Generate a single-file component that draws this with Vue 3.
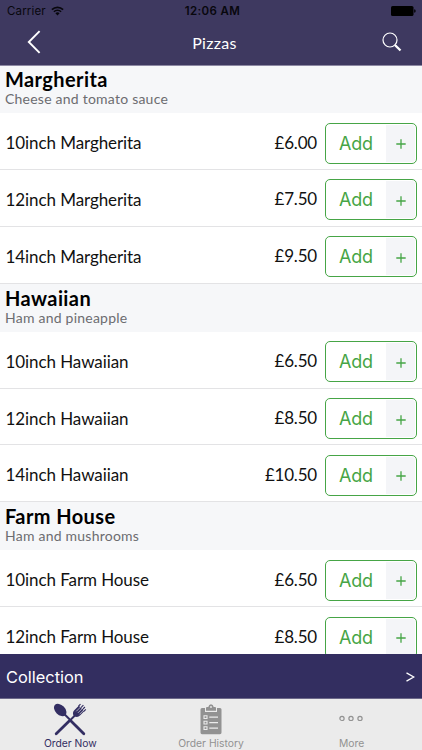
<script setup>
const sections = [
  {
    name: 'Margherita',
    description: 'Cheese and tomato sauce',
    items: [
      { name: '10inch Margherita', price: '£6.00' },
      { name: '12inch Margherita', price: '£7.50' },
      { name: '14inch Margherita', price: '£9.50' },
    ],
  },
  {
    name: 'Hawaiian',
    description: 'Ham and pineapple',
    items: [
      { name: '10inch Hawaiian', price: '£6.50' },
      { name: '12inch Hawaiian', price: '£8.50' },
      { name: '14inch Hawaiian', price: '£10.50' },
    ],
  },
  {
    name: 'Farm House',
    description: 'Ham and mushrooms',
    items: [
      { name: '10inch Farm House', price: '£6.50' },
      { name: '12inch Farm House', price: '£8.50' },
    ],
  },
]
</script>

<template>
  <div class="screen">
    <header class="top">
      <div class="status">
        <div class="carrier">
          <span>Carrier</span>
          <svg width="13" height="10" viewBox="0 0 13 10" fill="none" stroke="#08070d">
            <path d="M.9 3.6a8 8 0 0 1 11.2 0" stroke-width="1.7" />
            <path d="M2.9 5.8a5.1 5.1 0 0 1 7.2 0" stroke-width="1.6" />
            <path d="M6.5 9.4 4.4 7.2a3 3 0 0 1 4.2 0z" fill="#08070d" stroke="none" />
          </svg>
        </div>
        <span class="time">12:06 AM</span>
        <svg class="battery" width="25" height="10" viewBox="0 0 25 10">
          <rect width="22.5" height="10" rx="1.6" />
          <path d="M23.2 3.2Q24.700 3.500 24.700 5T23.200 6.800z" />
        </svg>
      </div>
      <nav class="nav">
        <svg class="back" width="14" height="24" viewBox="0 0 14 24" fill="none" stroke="#fff" stroke-width="1.9">
          <path d="M12.600 1.200 1.800 12l10.800 10.800" />
        </svg>
        <h1>Pizzas</h1>
        <svg class="search" width="20" height="20" viewBox="0 0 20 20" fill="none" stroke="#fff">
          <circle cx="8" cy="8" r="7" stroke-width="1.200" />
          <path d="m12.700 12.700 1.500 1.500" stroke-width="1.200" />
          <path d="m13.200 13.200 5.300 5.300" stroke-width="2.300" />
        </svg>
      </nav>
    </header>

    <main class="menu">
      <section v-for="section in sections" :key="section.name">
        <div class="heading">
          <h2>{{ section.name }}</h2>
          <p>{{ section.description }}</p>
        </div>
        <div v-for="item in section.items" :key="item.name" class="row">
          <span class="name">{{ item.name }}</span>
          <span class="price">{{ item.price }}</span>
          <button class="add">
            <span class="label">Add</span>
            <span class="plus">
              <svg width="10" height="10" viewBox="0 0 10 10" stroke="#46a546" stroke-width="1.300">
                <path d="M5 .3v9.400M.3 5h9.400" />
              </svg>
            </span>
          </button>
        </div>
      </section>
    </main>

    <div class="collection">
      <span>Collection</span>
      <svg width="9" height="10" viewBox="0 0 9 10" fill="none" stroke="#fff" stroke-width="1.300">
        <path d="M.5.9 7.800 5 .5 9.100" />
      </svg>
    </div>

    <footer class="tabs">
      <div class="tab active">
        <svg width="34" height="34" viewBox="0 0 34 34">
          <g fill="#332e62">
            <ellipse cx="7.200" cy="7" rx="4.900" ry="7.300" transform="rotate(-45 7.200 7)" />
            <path d="M20.300 12.300c-.8-2.800 0-4 1.200-5.200L25.800 2.800 31.200 8.200 27 12.500c-1.500 1.500-3 1.700-5.300 1z" />
          </g>
          <g stroke="#332e62" fill="none">
            <path d="m10.500 10.300 7 7" stroke-width="2" />
            <path d="m18 18 12.800 12.700" stroke-width="2.800" stroke-linecap="round" />
            <path d="M22.700 11.800 17 17.400" stroke-width="2" />
            <path d="M16.200 18 3.200 30.700" stroke-width="2.800" stroke-linecap="round" />
            <path d="m25.500 3.200 2-2M27.400 5.100l3-3M29.100 6.800l2.800-2.800M30.800 8.400l2-2" stroke-width="1.200" />
          </g>
          <path d="m23.300 8.300 4.500-4.500M24.900 9.900l4.700-4.700M26.500 11.300l4.700-4.700" fill="none" stroke="#ebebeb" stroke-width=".7" />
        </svg>
        <span>Order Now</span>
      </div>
      <div class="tab">
        <svg width="22" height="32" viewBox="0 0 22 32">
          <path d="M2 4h3v4h12V4h3q1.500 0 1.500 1.600v23q0 1.600-1.500 1.600H2Q.5 30.200.5 28.600v-23Q.5 4 2 4z" fill="#929292" />
          <path d="M6 6.800V3.900q0-1 1-1h1.300Q8.800.3 11 .3t2.700 2.600H15q1 0 1 1v2.900z" fill="#929292" />
          <circle cx="11" cy="3" r=".9" fill="#ebebeb" />
          <g fill="none" stroke="#ebebeb">
            <path d="M4 11.800h3v2.700H4zM4 17.300h3V20H4zM4 22.800h3v2.700H4z" stroke-width="1.100" />
            <path d="M9.300 13.200h8.700M9.300 18.700h8.700M9.300 24.200h8.700" stroke-width="1.300" />
          </g>
        </svg>
        <span>Order History</span>
      </div>
      <div class="tab">
        <svg width="26" height="34" viewBox="0 0 26 34" fill="none" stroke="#929292" stroke-width="1.200">
          <circle cx="3" cy="15.400" r="2.100" />
          <circle cx="12" cy="15.400" r="2.100" />
          <circle cx="21" cy="15.400" r="2.100" />
        </svg>
        <span>More</span>
      </div>
    </footer>
  </div>
</template>

<style>
body {
  margin: 0;
}
</style>

<style scoped>
.screen {
  width: 422px;
  height: 750px;
  display: flex;
  flex-direction: column;
  overflow: hidden;
  background: #fff;
  font-family: Lato, "Liberation Sans", sans-serif;
}
.top {
  flex: none;
  height: 65px;
  background: #3e3960;
  border-bottom: 1px solid #8d89a3;
}
.status {
  height: 22px;
  padding: 0 6px 0 7px;
  display: grid;
  grid-template-columns: 1fr auto 1fr;
  align-items: center;
  color: #08070d;
  font: 11.5px/22px Inter, sans-serif;
}
.carrier {
  display: flex;
  align-items: center;
  gap: 5px;
  letter-spacing: 0.15px;
}
.time {
  font-weight: 600;
  letter-spacing: 0.4px;
  padding-left: 2px;
}
.battery {
  justify-self: end;
}
.nav {
  height: 39px;
  display: grid;
  grid-template-columns: 1fr auto 1fr;
  align-items: center;
  padding: 0 20px 0 27px;
}
.nav h1 {
  margin: 1px 0 0;
  color: #fff;
  font-size: 16px;
  font-weight: 400;
  letter-spacing: 0.3px;
}
.search {
  justify-self: end;
}
.menu {
  flex: 1;
  min-height: 0;
  overflow: hidden;
  background: #fff;
}
.menu section:first-child {
  margin-top: -1px;
}
.heading {
  height: 48.2px;
  padding: 3px 6px 0 5px;
  box-sizing: border-box;
  background: #f6f7f9;
}
.heading h2 {
  margin: 0;
  font-size: 20px;
  line-height: 23px;
  font-weight: 700;
  letter-spacing: 0.4px;
  color: #000;
}
.heading p {
  margin: 0;
  font-size: 14px;
  line-height: 15px;
  letter-spacing: 0.23px;
  color: #6c6c70;
}
.row {
  height: 56.82px;
  padding: 0 5px 0 5.5px;
  box-sizing: border-box;
  border-bottom: 1px solid #e3e3e5;
  display: flex;
  align-items: center;
  font-size: 17px;
  color: #111;
}
.name {
  flex: 1;
  padding-top: 3px;
  letter-spacing: -0.08px;
}
.price {
  margin-right: 8px;
  padding-top: 2px;
  letter-spacing: -0.2px;
}
.add {
  width: 92px;
  height: 41px;
  margin: 4px 0 0;
  padding: 1px;
  box-sizing: border-box;
  display: flex;
  background: #fff;
  border: 1px solid #46a546;
  border-radius: 5px;
  color: #46a546;
  font: 18px/38px Inter, sans-serif;
}
.label {
  flex: 1;
  padding-right: 1px;
  text-align: center;
  letter-spacing: -0.2px;
}
.plus {
  width: 29px;
  padding: 2px 0 0 1px;
  box-sizing: border-box;
  display: flex;
  align-items: center;
  justify-content: center;
  background: #f4f5f8;
  border-radius: 0 3px 3px 0;
}
.collection {
  flex: none;
  height: 45px;
  padding: 1px 7px 0 6px;
  box-sizing: border-box;
  display: flex;
  align-items: center;
  justify-content: space-between;
  background: #332e60;
  border-bottom: 1px solid #6c6889;
  color: #fff;
  font: 16.4px Inter, sans-serif;
}
.tabs {
  flex: none;
  height: 51px;
  padding-top: 4px;
  box-sizing: border-box;
  display: grid;
  grid-template-columns: repeat(3, 1fr);
  background: #ebebeb;
}
.tab {
  display: flex;
  flex-direction: column;
  align-items: center;
  color: #929292;
  font: 10.3px/13px Inter, sans-serif;
}
.tab svg {
  flex: none;
  height: 34px;
}
.active {
  color: #332e62;
}
</style>
